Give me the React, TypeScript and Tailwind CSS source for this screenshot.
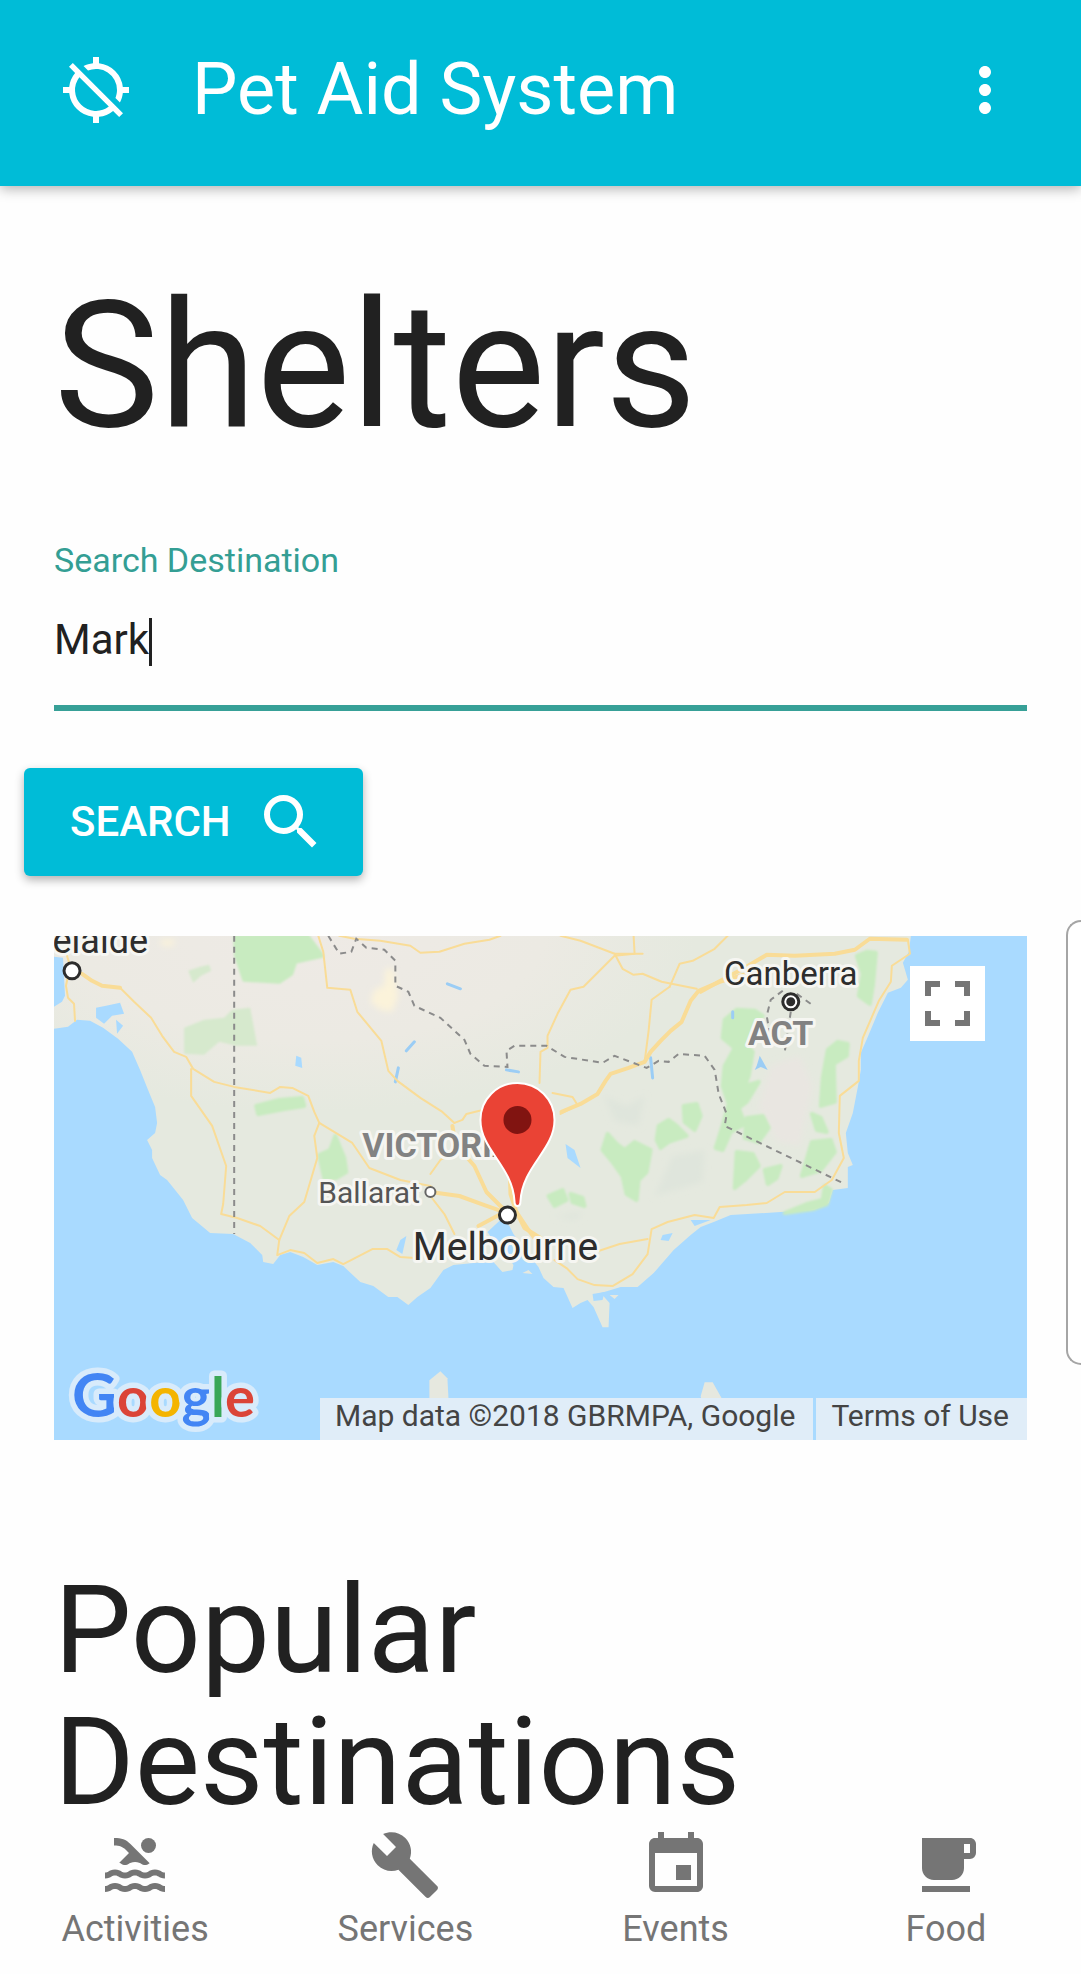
import { useState } from 'react';
import {
  MdBuild,
  MdEvent,
  MdLocalCafe,
  MdLocationDisabled,
  MdMoreVert,
  MdPool,
  MdSearch,
} from 'react-icons/md';

const tabs = [
  { label: 'Activities', Icon: MdPool },
  { label: 'Services', Icon: MdBuild },
  { label: 'Events', Icon: MdEvent },
  { label: 'Food', Icon: MdLocalCafe },
];

const majorRoads = [
  'M28 38 L38 45 L48 50 L66 52',
  'M507 176 L526 168 L543 158 L551 145 L556 138 L574 132 L590 126 L596 116 L606 105 L616 95 L627 86 L636 65 L644 55 L665 46 L700 36',
  'M646 56 L664 46 L690 32 L712 19 L740 20 L780 18 L800 14 L815 3 L852 4',
  'M398 190 L401 208 L420 230 L432 256 L450 274',
  'M376 256 L405 260 L430 269 L450 276 L424 290',
  'M455 228 L456 258 L462 276 L470 292 L486 302',
  'M462 276 L474 294 L480 302',
];

const roads = [
  'M28 38 L38 45 L48 50 L66 52 L80 66 L97 82 L108 100 L120 116 L132 121 L139 133 L160 146 L180 151 L216 157 L226 151 L238 152 L254 160 L260 176 L265 187 L298 207 L315 232 L346 244 L376 250 L382 256',
  'M13 20 L16 30 L12 50 L14 62 L20 68 L21 85',
  'M137 133 L137 160 L158 190 L172 230 L169 268 L167 278 L183 282 L206 290 L225 304 L235 280 L250 266 L263 222 L260 200 L265 187',
  'M225 304 L223 319 L236 314 L250 317 L263 327 L279 323 L289 328 L318 313 L333 313 L346 321 L360 322',
  'M264 0 L269 16 L273 52 L296 54 L303 76 L327 105 L334 135 L343 145 L366 162 L388 176 L400 187',
  'M285 0 L300 3 L326 5 L356 10 L366 17 L385 16 L410 8 L435 4 L446 0',
  'M400 187 L408 184 L412 178 L424 175 L440 172',
  'M397 200 L397 218 L386 224 L376 238',
  'M485 147 L486 116 L493 112 L493 100 L503 78 L516 54 L529 51 L560 20 L580 18 L579 0',
  'M506 0 L526 5 L560 18 L568 33 L579 39 L588 38 L607 46 L642 53',
  'M560 18 L588 18',
  'M615 51 L625 28 L638 25 L660 13 L673 0',
  'M590 126 L594 95 L597 64 L615 51',
  'M498 157 L518 161 L523 169 L506 178',
  'M376 260 L390 278 L400 298',
  'M853 4 L855 18 L837 30 L836 46 L824 65 L808 102 L804 125 L804 145 L785 160 L784 197 L789 222 L777 244 L760 256 L730 256 L712 267 L692 269 L665 271 L659 282 L640 279 L613 286 L597 293 L593 318 L578 338 L558 350 L540 349 L523 343 L512 332 L500 324',
  'M544 315 L565 308 L593 303',
];

const greens = [
  'M181 1 L253 0 L268 20 L241 26 L237 38 L225 46 L190 44 L182 20 Z',
  'M202 170 L225 164 L248 162 L250 170 L230 173 L204 178 Z',
  'M265 219 L276 214 L281 200 L290 222 L292 236 L282 242 L270 242 Z',
  'M802 20 L812 16 L821 17 L818 50 L815 68 L804 60 L808 38 Z',
  'M670 84 L682 74 L700 75 L708 80 L696 100 L690 108 L698 116 L694 140 L690 150 L704 146 L692 166 L684 172 L690 188 L676 196 L668 214 L661 212 L668 190 L674 168 L668 150 L670 130 L680 112 L668 102 Z',
  'M692 182 L708 180 L714 192 L704 206 L690 202 Z',
  'M682 216 L698 218 L704 230 L690 244 L680 252 Z',
  'M773 114 L783 106 L793 108 L792 120 L779 128 L780 166 L766 170 L768 142 Z',
  'M757 178 L766 182 L772 196 L762 194 Z',
  'M757 206 L776 204 L780 216 L766 234 L747 240 Z',
  'M730 277 L752 268 L768 264 L770 250 L776 254 L772 268 L758 273 Z',
  'M629 170 L642 168 L646 180 L640 194 L630 186 Z',
  'M604 190 L614 184 L622 190 L632 200 L614 206 L606 212 L602 204 Z',
  'M553 198 L562 208 L570 214 L580 206 L596 214 L592 236 L584 244 L582 264 L572 258 L568 240 L558 226 L548 214 Z',
  'M494 260 L508 254 L512 264 L500 270 Z M516 258 L528 262 L530 270 L518 266 Z',
  'M710 234 L726 230 L722 242 L713 248 Z',
];

const paleGreens = [
  'M134 35 L146 31 L155 29 L157 35 L147 40 L139 47 Z',
  'M130 92 L150 84 L170 82 L178 74 L196 72 L203 110 L182 110 L165 106 L150 119 L130 118 Z',
];

function MapCanvas() {
  return (
    <svg
      className="block h-full w-full"
      viewBox="0 0 972 504"
      preserveAspectRatio="xMidYMid slice"
      role="img"
      aria-label="Map of Victoria centred on Melbourne"
    >
      <defs>
        <radialGradient id="arid" cx="0.3" cy="0" r="0.45">
          <stop offset="0" stopColor="#eeeae5" />
          <stop offset="0.6" stopColor="#eceae3" />
          <stop offset="1" stopColor="#e5e9df" />
        </radialGradient>
        <filter id="soft" x="-10%" y="-10%" width="120%" height="120%">
          <feGaussianBlur stdDeviation="3" />
        </filter>
        <filter id="feather" x="-10%" y="-10%" width="120%" height="120%">
          <feGaussianBlur stdDeviation="1" />
        </filter>
      </defs>
      <rect width="972" height="504" fill="#a9daff" />
      <path
        fill="url(#arid)"
        d="M0 0 L856 0 L854 16 L848 27 L853 44 L846 52 L833 57 L823 77 L813 101 L806 117 L806 134 L803 151 L798 177 L791 197 L793 217 L798 229 L793 231 L793 252 L778 254 L774 267 L759 274 L726 276 L676 279 L659 286 L646 291 L636 299 L619 314 L599 337 L583 351 L566 351 L553 355 L546 357 L555 367 L554 391 L548 391 L539 371 L533 364 L526 367 L518 372 L509 352 L499 351 L489 342 L484 331 L472 316 L459 298 L455 290 L447 283 L433 296 L440 306 L452 318 L459 329 L458 334 L448 336 L439 326 L419 327 L399 329 L389 334 L376 352 L363 361 L354 369 L343 361 L334 361 L319 350 L306 346 L289 330 L279 326 L263 329 L249 321 L236 316 L226 319 L219 328 L209 326 L208 319 L196 307 L179 298 L156 297 L138 282 L129 264 L113 244 L106 239 L98 222 L98 214 L93 204 L101 197 L103 187 L101 171 L94 154 L86 134 L78 116 L64 103 L49 92 L36 85 L23 84 L14 91 L0 93 L0 71 L8 66 L11 60 L9 22 L0 21 Z"
      />
      <g fill="#e6e8df">
        <path d="M375 444 L386 435 L393 442 L395 480 L375 480 Z" />
        <path d="M646 460 L650 446 L658 446 L667 462 L690 480 L688 504 L664 504 L650 480 Z" />
        <path d="M468 337 L474 334 L478 338 Z M555 359 L564 359 L560 363 Z" />
      </g>
      <g fill="#a9daff">
        <path d="M42 72 L52 70 L66 67 L70 78 L58 80 L50 88 L42 82 Z" />
        <path d="M62 84 L69 90 L63 98 Z M242 120 L247 122 L248 132 L241 130 Z" />
        <path d="M346 304 L352 300 L348 318 L342 314 Z M608 299 L618 297 L614 305 L606 304 Z M636 284 L656 284 L640 290 Z" />
        <path d="M511 208 L520 214 L526 232 L513 222 Z M538 358 L550 356 L548 364 L539 365 Z" />
      </g>
      <g filter="url(#soft)">
        <path fill="#fbf3da" d="M331 34 L338 32 L344 60 L338 76 L326 74 L316 66 L320 54 L330 50 Z M106 4 L122 4 L118 10 L108 10 Z" />
        <path fill="#e9e6e1" d="M716 130 L745 120 L758 150 L745 210 L722 205 L704 170 Z" />
        <path fill="#dfe5dc" d="M550 160 L572 170 L590 160 L584 190 L560 185 Z M618 220 L650 214 L648 246 L600 260 Z M500 280 L530 276 L520 284 Z" />
      </g>
      <g fill="#c8ebc0" filter="url(#feather)">
        {greens.map((d) => (
          <path key={d} d={d} stroke="#c8ebc0" strokeWidth="4" strokeLinejoin="round" />
        ))}
      </g>
      <g fill="#d6e9cd" filter="url(#feather)">
        {paleGreens.map((d) => (
          <path key={d} d={d} />
        ))}
      </g>
      <path fill="#9bcdf5" d="M702 130 L705 120 L713 134 L706 131 L700 134 Z" />
      <g fill="none" stroke="#9bcdf5" strokeWidth="3" strokeLinecap="round">
        <path d="M352 115 L360 106 M344 132 L341 146 M393 48 L406 53 M452 134 L464 136 M596 122 L598 142 M678 82 L678 76" />
      </g>
      <g fill="none" stroke="#f9dc97" strokeWidth="2" strokeLinejoin="round" strokeLinecap="round">
        {roads.map((d) => (
          <path key={d} d={d} />
        ))}
        {majorRoads.map((d) => (
          <path key={d} d={d} strokeWidth="4" />
        ))}
      </g>
      <g fill="none" stroke="#8b8b8b" strokeWidth="2" strokeDasharray="6 5">
        <path d="M180 0 V298" />
        <path d="M274 0 L285 18 L297 16 L302 3 L312 12 L330 14 L341 25 L341 50 L354 56 L360 70 L386 82 L410 104 L416 118 L430 130 L453 131 L452 115 L460 110 L492 110 L510 121 L548 127 L560 120 L592 132 L604 125 L614 126 L624 118 L650 120 L660 134 L664 158 L672 178 L670 190 L790 248" />
        <path d="M728 55 L716 64 L712 80 L716 104 M742 58 L756 68 M736 76 L730 116" />
      </g>

      <g
        fontFamily="Roboto, sans-serif"
        stroke="#f6f6f2"
        strokeWidth="6"
        strokeLinejoin="round"
        paintOrder="stroke"
        fill="#2d2d2d"
      >
        <text x="94" y="17" fontSize="36" textAnchor="end">Adelaide</text>
        <text x="736" y="49" fontSize="33" textAnchor="middle">Canberra</text>
        <text x="264" y="267" fontSize="30" fill="#555555">Ballarat</text>
        <text x="451" y="324" fontSize="39" textAnchor="middle">Melbourne</text>
        <g fill="#828282" fontSize="34" fontWeight="700">
          <text x="308" y="221">VICTORIA</text>
          <text x="726" y="109" textAnchor="middle">ACT</text>
        </g>
      </g>
      <g fill="#ffffff" stroke="#2d2d2d" strokeWidth="3">
        <circle cx="18" cy="35" r="8" />
        <circle cx="453" cy="279" r="8" />
        <circle cx="736" cy="66" r="8" />
        <circle cx="736" cy="66" r="3" fill="#2d2d2d" />
        <circle cx="376" cy="256" r="5" stroke="#666666" strokeWidth="2" />
      </g>

      <path
        d="M463 270 C461 270 460 268 460 265 C458 230 426 214 426 184 A37 37 0 0 1 500 184 C500 214 468 230 466 265 C466 268 465 270 463 270 Z"
        fill="#ea4335"
        stroke="#ffffff"
        strokeWidth="2"
      />
      <circle cx="463" cy="184" r="14" fill="#811411" />

      <text
        x="18"
        y="481"
        fontFamily="Lato, sans-serif"
        fontSize="56"
        fontWeight="700"
        stroke="#d8ebfb"
        strokeWidth="11"
        strokeLinejoin="round"
        paintOrder="stroke"
      >
        <tspan fill="#4285f4" fontSize="62">G</tspan>
        <tspan fill="#db4437">o</tspan>
        <tspan fill="#f4b400">o</tspan>
        <tspan fill="#4285f4">g</tspan>
        <tspan fill="#3aa757">l</tspan>
        <tspan fill="#db4437">e</tspan>
      </text>
    </svg>
  );
}

export default function App() {
  const [query, setQuery] = useState('Mark');

  return (
    <div className="relative flex min-h-screen flex-col overflow-x-hidden bg-[#fefefe] font-[Roboto,sans-serif] text-[#212121]">
      <header className="flex h-[186px] items-center bg-[#00bcd7] px-[60px] pb-1.5 text-white shadow-[0_3px_12px_rgba(0,0,0,0.3)]">
        <button type="button" aria-label="Location disabled">
          <MdLocationDisabled className="size-[72px]" />
        </button>
        <span className="ml-[60px] text-[72px] leading-[84px]">Pet Aid System</span>
        <button type="button" aria-label="More options" className="ml-auto">
          <MdMoreVert className="size-[72px]" />
        </button>
      </header>

      <main className="px-[54px] pt-[83px]">
        <h1 className="text-[177px] leading-[194px]">Shelters</h1>

        <form onSubmit={(event) => event.preventDefault()}>
          <label htmlFor="destination" className="mt-[77px] block text-[34px] leading-[40px] text-[#349e94]">
            Search Destination
          </label>
          <div className="mt-[30px] flex h-[101px] items-start border-b-6 border-[#37a097]">
            <input
              id="destination"
              type="text"
              value={query}
              onChange={(event) => setQuery(event.target.value)}
              className="field-sizing-content h-[60px] max-w-full text-[42px] leading-[60px] caret-transparent outline-none"
            />
            <span aria-hidden="true" className="mt-2 h-12 w-[3px] bg-[#212121]" />
          </div>
          <button
            type="submit"
            className="mt-[57px] -ml-[30px] flex h-[108px] items-center gap-6 rounded-md bg-[#00bcd7] pr-9 pl-[46px] text-[42px] leading-[60px] font-medium text-white shadow-[0_4px_10px_rgba(0,0,0,0.3)]"
          >
            SEARCH
            <MdSearch className="size-[72px]" />
          </button>
        </form>

        <section aria-label="Map" className="relative mt-[60px] h-[504px] overflow-hidden">
          <MapCanvas />
          <button
            type="button"
            aria-label="Toggle fullscreen view"
            className="absolute top-[30px] right-[42px] flex size-[75px] items-center justify-center bg-white"
          >
            <svg className="size-[45px]" viewBox="0 0 45 45" fill="none" stroke="#757575" strokeWidth="6">
              <path d="M3 15V3H15M30 3H42V15M42 30V42H30M15 42H3V30" />
            </svg>
          </button>
          <div className="absolute right-0 bottom-0 flex h-[42px] gap-[3px] text-[30px] leading-[36px] text-[#444444]">
            <span className="bg-[#e0edf8] pr-[18px] pl-[15px]">Map data ©2018 GBRMPA, Google</span>
            <a href="#terms" className="bg-[#e0edf8] pr-[18px] pl-[15px]">
              Terms of Use
            </a>
          </div>
        </section>

        <h3 className="mt-[124px] text-[123px] leading-[132px]">Popular Destinations</h3>
      </main>

      <nav className="sticky bottom-0 mt-auto grid grid-cols-4 text-[#757575]">
        {tabs.map(({ label, Icon }) => (
          <a key={label} href={`#${label.toLowerCase()}`} className="flex flex-col items-center pb-[25px]">
            <Icon className="size-[72px]" />
            <span className="mt-2 text-[36px] leading-[40px]">{label}</span>
          </a>
        ))}
      </nav>

      <div
        aria-hidden="true"
        className="absolute top-[920px] right-0 h-[445px] w-[15px] rounded-l-[18px] border-2 border-r-0 border-[#a5a5a5] bg-white"
      />
    </div>
  );
}
